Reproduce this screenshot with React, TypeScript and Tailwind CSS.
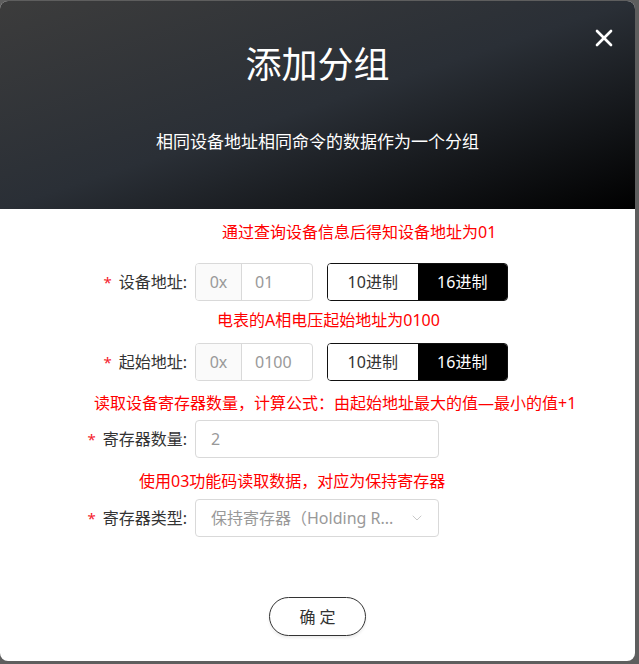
import { X, ChevronDown } from 'lucide-react'

const font = { fontFamily: '"Noto Sans", "Noto Sans CJK SC", sans-serif' }

function Label({ text }: { text: string }) {
    return (
        <div className="w-[187px] flex items-center justify-end text-[16px] text-[#333]">
            <span className="text-[#f5222d] mr-[7px] text-[15px]">*</span>
            <span>{text}:</span>
        </div>
    )
}

function HexRow({ value }: { value: string }) {
    return (
        <div className="flex items-center h-[38px]">
            <Label text={value === '01' ? '设备地址' : '起始地址'} />
            <div className="ml-[8px] flex h-[38px] w-[118px] border border-[#d9d9d9] rounded-[4px] overflow-hidden">
                <div className="w-[46px] bg-[#fafafa] border-r border-[#d9d9d9] flex items-center justify-center text-[16px] text-[#999]">
                    0x
                </div>
                <div className="flex-1 flex items-center pl-[13px] text-[16px] text-[#999]">{value}</div>
            </div>
            <div className="ml-[14px] flex h-[38px] w-[181px] rounded-[4px] overflow-hidden border border-[#111]">
                <div className="flex-1 flex items-center justify-center text-[16px] text-[#333] bg-white">10进制</div>
                <div className="flex-1 flex items-center justify-center text-[16px] text-white bg-black">16进制</div>
            </div>
        </div>
    )
}

function Hint({ text, ml }: { text: string; ml: string }) {
    return <div className={`h-[22px] leading-[22px] text-[16px] text-[#ff0000] whitespace-nowrap ${ml}`}>{text}</div>
}

export default function App() {
    return (
        <div className="w-[639px] h-[664px] bg-[#5e5e5e] overflow-hidden" style={font}>
            <div className="pt-px flex">
                <div className="w-[635px] h-[660px] bg-white rounded-[8px] overflow-hidden flex flex-col">
                    {/* Header */}
                    <div className="relative h-[208px] bg-[linear-gradient(to_bottom_right,#3c3c3c_0%,#2a2f36_50%,#000_100%)] flex flex-col items-center">
                        <button className="absolute right-[17px] top-[23px] text-white">
                            <X size={28} strokeWidth={2.3} />
                        </button>
                        <h1 className="mt-[39px] text-[36px] leading-[50px] text-white">添加分组</h1>
                        <p className="mt-[40px] text-[17px] leading-[24px] text-white">相同设备地址相同命令的数据作为一个分组</p>
                    </div>

                    {/* Form */}
                    <div className="flex flex-col pt-[12px]">
                        <Hint text="通过查询设备信息后得知设备地址为01" ml="ml-[222px]" />
                        <div className="mt-[20px]">
                            <HexRow value="01" />
                        </div>
                        <div className="mt-[8px]">
                            <Hint text="电表的A相电压起始地址为0100" ml="ml-[217px]" />
                        </div>
                        <div className="mt-[12px]">
                            <HexRow value="0100" />
                        </div>
                        <div className="mt-[11px]">
                            <Hint text="读取设备寄存器数量，计算公式：由起始地址最大的值—最小的值+1" ml="ml-[94px]" />
                        </div>
                        <div className="mt-[6px] flex items-center h-[38px]">
                            <Label text="寄存器数量" />
                            <div className="ml-[8px] w-[244px] h-[38px] border border-[#d9d9d9] rounded-[4px] flex items-center pl-[15px] text-[16px] text-[#999]">
                                2
                            </div>
                        </div>
                        <div className="mt-[12px]">
                            <Hint text="使用03功能码读取数据，对应为保持寄存器" ml="ml-[139px]" />
                        </div>
                        <div className="mt-[7px] flex items-center h-[38px]">
                            <Label text="寄存器类型" />
                            <div className="ml-[8px] w-[244px] h-[38px] border border-[#d9d9d9] rounded-[4px] flex items-center justify-between pl-[15px] pr-[13px] text-[16px] text-[#999]">
                                <span className="whitespace-nowrap">保持寄存器（Holding R...</span>
                                <ChevronDown size={16} strokeWidth={1.2} className="text-[#bbb]" />
                            </div>
                        </div>
                        <div className="mt-[60px] flex justify-center">
                            <button className="w-[97px] h-[39px] rounded-full border border-[#333] text-[16px] text-[#333] shadow-[0_2px_3px_rgba(0,0,0,0.08)]">
                                确 定
                            </button>
                        </div>
                    </div>
                </div>
            </div>
        </div>
    )
}
